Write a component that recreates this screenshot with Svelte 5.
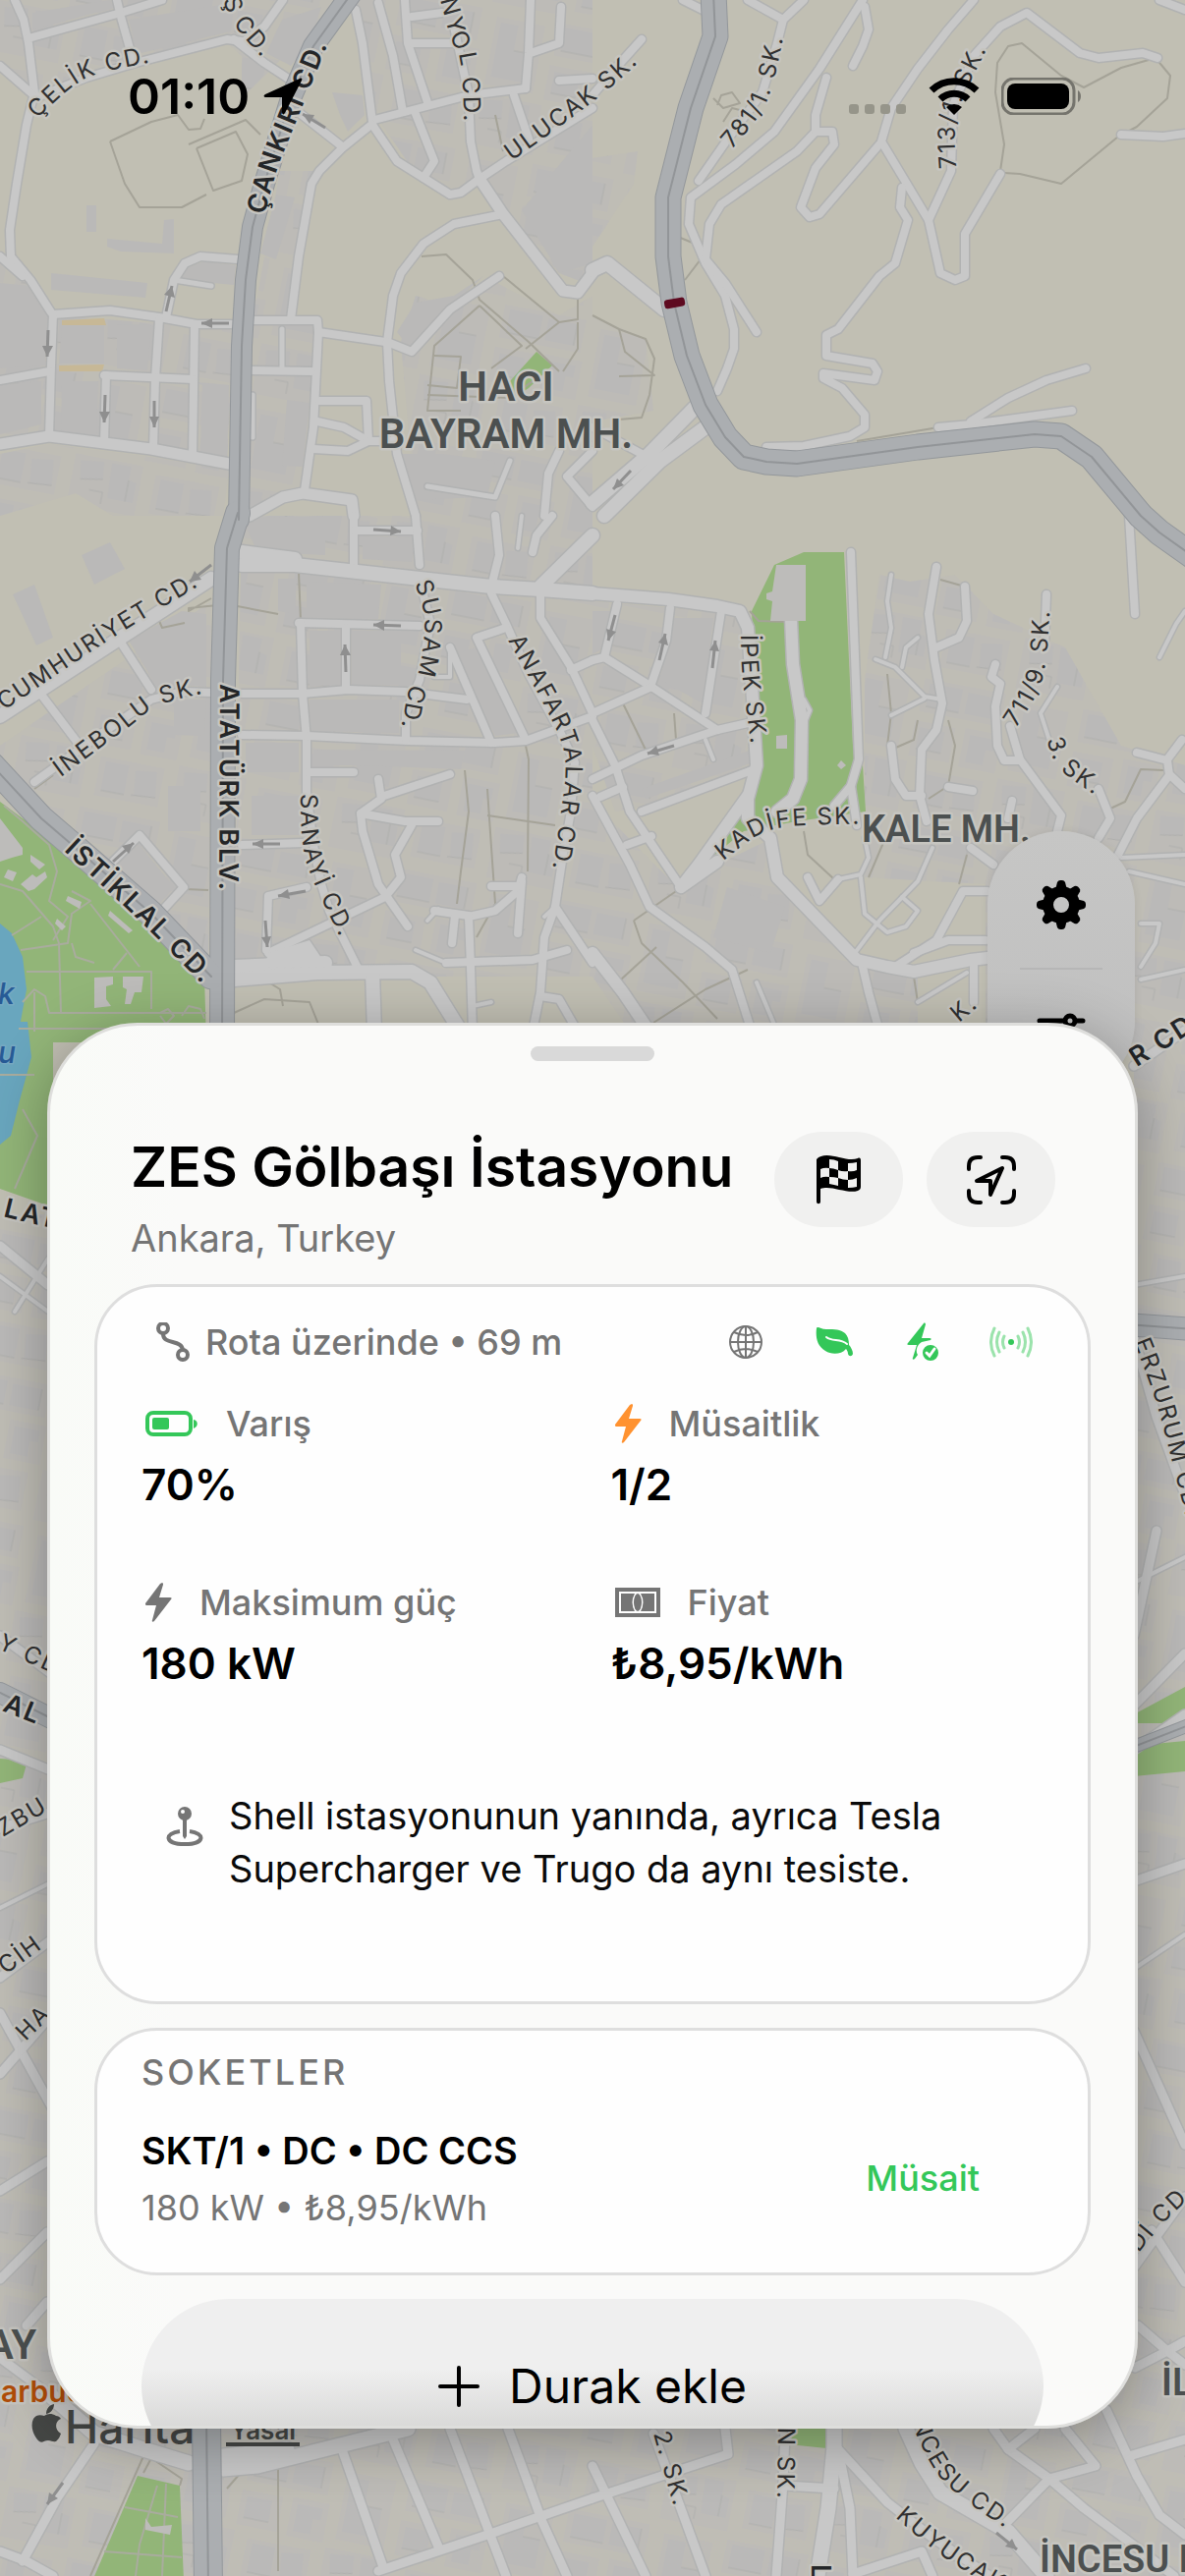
<script>
  // Each tile maps local drawing units to map units: [x offset, y offset, x units per px, y units per px].
  const tiles = {
    A: [0, 0, 2.6, 2.987],
    B: [603, 0, 2.6, 2.987],
    C: [0, 525, 2.6, 2.987],
    D: [603, 525, 2.6, 2.987],
    E: [0, 2200, 2.6, 3],
    F: [603, 2200, 2.6, 3],
    G: [0, 1040, 1.3, 1.12]
  };

  function project(tile, text) {
    const [ox, oy, sx, sy] = tiles[tile];
    return text
      .trim()
      .split(/\s+/)
      .map((p) => {
        const [x, y] = p.split(',').map(Number);
        return [Math.round(ox + x / sx), Math.round(oy + y / sy)];
      });
  }
  const line = (tile, text) => 'M' + project(tile, text).map((p) => p.join(' ')).join('L');

  // Smooth path through the points, used as the baseline of curved labels.
  function curve(tile, text) {
    const p = project(tile, text);
    let d = `M${p[0].join(' ')}`;
    for (let i = 0; i < p.length - 1; i++) {
      const a = p[i - 1] ?? p[i];
      const b = p[i];
      const c = p[i + 1];
      const e = p[i + 2] ?? c;
      const r = (n) => Math.round(n);
      d += `C${r(b[0] + (c[0] - a[0]) / 6)} ${r(b[1] + (c[1] - a[1]) / 6)} ${r(c[0] - (e[0] - b[0]) / 6)} ${r(c[1] - (e[1] - b[1]) / 6)} ${c.join(' ')}`;
    }
    return d;
  }

  const streets = {
    A: {
      8: `40,0 62,60 75,130 90,280 70,380 45,560 25,700 28,780 80,850 135,950|75,115 320,40 430,0|310,0 320,50 350,180|0,200 80,280|90,300 230,235 360,190 600,120 640,125|640,130 700,80 750,0|620,120 700,190 790,260|0,780 60,840|140,955 290,945 420,965 520,985 610,985|140,955 135,1110 130,1330|440,965 460,850 490,800 530,780 630,790|420,970 410,1150 405,1365|515,985 510,1390|0,1155 130,1130|275,1140 510,1152|280,1140 275,1345|665,975 840,975 842,1010 830,1300 805,1490|665,1125 825,1130|842,1010 1020,1040|770,970 790,780 825,560 845,520 905,450 985,375|795,345 905,445|940,30 960,130 985,370|1000,10 1040,170 1065,340|1070,0 1080,130 1110,240 1130,310|990,365 1240,290 1390,270|985,380 1050,490 1120,540 1190,590 1220,585 1270,545|1100,345 1150,490 1120,540|1200,80 1240,290 1245,430 1260,520 1270,545|1270,545 1340,490 1568,330|1330,650 1200,680 1120,740 1060,830 1040,900 1025,1040 1030,1160 1050,1380 1100,1568|1025,1040 1090,1070 1190,940 1320,840|1405,0 1400,160 1390,270|1405,160 1480,130 1485,20|1480,245 1568,240|1360,290 1400,420|1090,130 1200,130|1090,50 1170,40|845,1220 970,1220 975,1340 910,1300 840,1280|830,1365 920,1370 975,1340 1040,1340|1568,1370 1500,1450 1568,1540|1440,1568 1450,1440 1480,1370`,
      11: `0,1350 130,1325 400,1365 605,1410|660,1568 750,1510 800,1500 930,1520 935,1568|1270,545 1330,650 1490,885 1530,890 1568,830`,
      5: `745,1000 745,1130|460,850 560,870|668,1200 668,1330|1130,1480 1310,1510 1350,1400`
    },
    B: {
      8: `410,0 505,60 560,0|505,60 490,130 450,280 360,420 280,550|715,0 600,210 480,400 380,500 260,600 255,680 300,800 350,900 375,1000 375,1060 355,1120 330,1190|720,20 730,90 715,140 690,200|620,235 590,350 590,400 540,460 340,620 310,680 300,790 350,860 435,1010|590,400 635,400 640,440 590,510 550,630 575,660 600,650 760,440|1010,0 940,90 860,210 790,330 765,430 890,670 920,830 960,850 985,840 985,710 1080,530|890,670 950,520 955,320 1010,170 1080,80 1150,40 1290,160 1340,175 1455,160 1495,175|820,570 815,630 835,670 800,800 760,840 650,1000 620,1020 620,1080 740,1105 755,1130 745,1155 610,1135 610,1150 660,1180 720,1260 720,1300 680,1325 560,1355 460,1360|1400,410 1510,415 1568,405|915,1300 1000,1290 1270,1250|1000,1280 1100,1210 1200,1155 1305,1120|0,1300 130,1380|240,0 290,30|130,120 60,210 0,290|1500,0 1568,30`,
      14: `0,820 40,800 190,940|270,1240 150,1380 0,1530|310,1290 180,1400 30,1568`
    },
    C: {
      8: `320,385 400,530|110,545 205,690|90,810 260,670 400,560 480,535 560,538|640,540 800,540 920,530 1070,535 1235,560|935,0 935,150|935,45 1105,45|1100,0 1110,150|790,325 1110,335|795,325 800,540 810,680 812,840 830,1000 850,1120 870,1200 950,1380|915,340 915,530|640,665 810,670 1080,685 1310,690 1390,685 1568,610|1110,190 1140,330 1110,500 1075,600 1075,680|1300,235 1340,330 1400,480 1480,650 1520,750 1510,900 1490,1030 1470,1190 1440,1280 1430,1450 1410,1568|1340,340 1260,370 1390,680|1190,400 1300,690|1430,225 1430,310 1510,460 1568,600|1510,470 1568,440|1300,215 1320,120 1310,0|1410,110 1420,60 1460,0|815,780 935,780|1000,800 1010,860 955,905 960,960 1000,1120 1080,1250|1010,855 1190,785|955,905 1070,930 1160,930|1090,940 1045,1030 1060,1100 1020,1160 710,1330|640,1000 800,995|810,1130 710,1155 705,1320|300,1050 370,970 485,1130 430,1200|1380,1100 1370,1140 1310,1200 1240,1220 1245,1370 1250,1568|1380,1110 1370,1270|1150,1200 1240,1215|1180,1360 1410,1350 1500,1320|1300,1125 1370,1125|1470,1190 1568,1360|1430,1460 1480,1470 1530,1568|1195,1300 1205,1215`,
      14: `0,610 560,190|640,110 780,130|640,150 780,150 1300,215 1430,225 1568,235|1430,215 1568,60|620,1370 860,1360|620,1410 840,1390 1090,1385 1140,1420 1220,1568|985,1390 990,1568`,
      4: `1370,100 1380,0|1100,1320 1180,1360|1250,1490 1300,1480|1130,1230 1160,1195|1150,490 1190,490 1190,400|1470,1190 1440,1220`
    },
    D: {
      8: `65,270 30,430|205,280 195,380 155,510|340,290 300,600|30,430 155,520 330,650|0,600 155,520|0,800 130,730 330,650 410,630|0,620 60,760 100,900 235,1130|0,440 30,430|20,855 80,825|0,850 100,1060 150,1190 300,1310 370,1380 420,1568|90,1000 155,975|130,900 430,770|685,110 705,740 685,820 640,880|685,820 700,940|910,155 890,300 905,440 925,570 910,650 870,710 865,850 885,930|985,215 990,320 970,370 910,400|790,700 800,800 830,850 870,850|940,825 1005,835|1200,240 1195,400|1065,450 1055,490 1080,510 1065,580 1070,700 1090,745 1130,745|1105,640 1130,740 1240,910 1230,960|1340,830 1370,920 1340,980|1110,865 1100,920|1420,0 1435,300|1440,720 1520,745 1525,790 1440,920 1390,1030|1520,740 1560,680|1530,790 1568,830|1045,1140 980,1140 910,1290 800,1370|1040,1290 940,1290 850,1330|570,1100 600,1170 650,1105|1010,1350 1010,1480|1000,1010 1060,1060|715,1370 730,1450 760,1568`,
      12: `0,235 200,255 330,275 390,290 410,340 425,560 435,760 410,860 410,920 470,980 490,1100 700,1350 780,1370 850,1385 1000,1350 1045,1345|525,315 530,450 555,620 550,800 530,860 490,900|410,850 280,1060 235,1130 330,1050|0,1330 80,1450 150,1568`,
      4: `790,180 780,260 790,340 775,430|750,435 800,460 880,550 925,560|860,370 830,400 820,460|880,555 790,605|1230,520 1185,600 1220,720|1568,290 1545,330 1500,430|1400,1040 1568,1030|1420,1080 1568,1120|695,1330 760,1230 860,1110 900,1010|650,1105 710,1090 730,1040 720,980|710,1100 720,1210 780,1265 830,1250 860,1200 820,1160|990,1390 860,1480|435,1420 490,1568|1450,1240 1500,1240 1490,1300 1450,1370|1450,1410 1568,1380|560,560 575,590 565,620|300,680 320,740`
    },
    E: {
      9: `0,90 126,0|0,360 126,215|70,500 126,430|250,860 150,1030 60,1220|0,1190 70,1220 140,1266|905,880 1015,1240|1040,850 1160,1175|1190,815 1300,1150 1340,1266|1345,815 1435,1100 1500,1266|1000,1250 1290,1140 1568,1030|0,600 130,710`,
      15: `130,710 250,830 380,880 500,920|590,940 680,930 890,870 1080,815|590,900 760,880`
    },
    F: {
      9: `0,930 140,1266|160,830 190,920 300,1266|0,1030 360,895 350,815|510,830 505,980 485,1266|505,990 640,1000|650,880 680,1060 690,1266|650,880 780,1040 900,1150 1050,1266|690,1260 870,1190 900,1266|1060,815 1100,880 1210,970 1300,1060 1440,1180 1540,1266|1100,880 1170,815|1250,815 1330,930 1210,970 1090,1110|1360,760 1440,960 1500,1080 1568,1140|1420,900 1568,850|1442,500 1520,580 1568,550|1520,580 1435,630|1480,210 1568,370|1520,580 1568,620`,
      15: `640,815 640,870 625,1060 595,1266|830,815 870,920 920,1010 1100,1130 1200,1266`
    },
    G: {
      9: `0,255 64,300|0,700 70,745|0,830 70,855|0,920 70,900|0,1090 70,1045|0,1130 70,1240|0,1200 70,1130|1500,50 1568,10|1500,360 1530,450 1568,540|1500,780 1568,720|1500,830 1568,790|1530,580 1500,700|1500,1150 1568,1280|1500,1420 1568,1340|1500,980 1568,960`,
      4: `0,290 64,330|20,330 64,270|0,1010 70,980|1500,300 1568,290|1500,1080 1568,1040|1500,640 1568,610`
    }
  };

  const highways = [
    ['A', 22, '930,-20 830,140 770,300 700,560 668,690 650,850 640,1050 632,1580'],
    ['B', 27, '320,-20 325,110 260,330 200,600 200,780 215,920 250,1080 300,1230 350,1330 400,1390 460,1405 540,1410 860,1360 1170,1320 1240,1325 1320,1390 1450,1568 1500,1620 1600,1700'],
    ['C', 26, '630,-10 600,100 590,500 588,1600'],
    ['C', 27, '-20,760 110,920 200,1010 400,1210 560,1400'],
    ['E', 30, '545,780 550,1300'],
    ['G', 22, '0,765 80,800'],
    ['G', 24, '1490,345 1580,350'],
    ['G', 14, '1490,830 1580,800']
  ];

  const parks = [
    ['A', '1350,1160 1420,1070 1460,1110 1400,1180 1360,1210'],
    ['C', '0,870 60,920 130,980 540,1400 545,1600 0,1600'],
    ['D', '420,290 480,150 560,110 665,110 690,700 715,760 722,900 540,930 400,960 315,1040 400,880 440,760'],
    ['E', '365,960 475,990 485,1280 245,1280'],
    ['F', '520,865 540,800 625,800 620,875'],
    ['G', '0,0 70,0 70,212 0,190'],
    ['G', '0,840 36,842 30,862 0,868'],
    ['G', '1500,790 1568,758 1568,800 1500,800'],
    ['G', '1500,825 1568,820 1568,855 1500,860']
  ];

  const lakes = [
    ['C', '0,1240 30,1270 60,1340 70,1440 50,1568 40,1600 0,1600'],
    ['G', '0,0 36,0 42,40 26,90 14,130 0,140']
  ];

  const urban = [
    ['A', '0,0 900,0 640,300 640,170 600,130 360,200 240,240 100,300 80,280 0,180'],
    ['A', '0,800 80,870 140,960 620,1000 600,1400 400,1360 0,1330'],
    ['A', '0,1380 130,1350 400,1390 605,1430 590,1568 300,1568 200,1500 0,1568'],
    ['A', '830,520 740,520 680,900 660,975 770,970'],
    ['A', '660,975 845,975 840,1300 805,1490 750,1500 660,1568'],
    ['A', '940,0 1568,0 1568,870 1480,830 1270,540 1190,590 1100,530 1000,360'],
    ['A', '1060,1040 1100,900 1190,930 1300,850 1480,960 1568,900 1568,1568 1100,1568'],
    ['B', '0,480 120,460 110,560 0,750'],
    ['B', '0,960 140,1030 160,1250 0,1280'],
    ['C', '640,0 1568,0 1568,1400 980,1400 620,1370'],
    ['C', '0,700 200,540 560,260 550,1400 420,1220 210,1010 0,780'],
    ['D', '0,260 400,300 420,760 240,860 60,900 0,700'],
    ['D', '0,870 235,1140 330,1060 460,990 500,1110 700,1350 860,1400 860,1568 100,1568 0,1400'],
    ['D', '720,500 760,180 840,200 960,180 1060,300 1250,400 1400,700 1568,760 1568,1600 1040,1600 1040,1120 720,1100'],
    ['E', '0,0 1568,0 1568,1300 0,1300'],
    ['F', '0,0 1568,0 1568,1300 0,1300'],
    ['G', '0,220 70,220 70,1300 0,1300'],
    ['G', '1500,0 1568,0 1568,1300 1500,1300']
  ];

  const buildings = [
    ['A', '85,40 290,0 305,25 85,90'],
    ['A', '340,60 620,10 610,95 365,165'],
    ['A', '745,60 850,20 820,130 770,200 705,160'],
    ['A', '135,830 390,860 385,905 135,880'],
    ['A', '0,860 80,870 125,960 120,1110 0,1120'],
    ['A', '165,990 275,990 275,1105 155,1105'],
    ['A', '310,985 400,990 390,1125 310,1120'],
    ['A', '475,820 540,795 625,805 620,865 480,850'],
    ['A', '283,725 430,740 435,670 460,665 460,770 320,765 283,750'],
    ['A', '230,625 255,625 255,705 230,705'],
    ['A', '1380,640 1568,380 1568,800 1480,830'],
    ['A', '1100,920 1200,900 1280,840 1080,1050 1050,1010'],
    ['A', '0,1170 110,1160 110,1290 0,1320'],
    ['A', '165,1160 260,1160 255,1325 160,1310'],
    ['A', '760,1215 820,1225 800,1420 745,1415'],
    ['A', '730,590 780,600 730,790 690,770'],
    ['A', '535,1170 500,1160 605,1170 600,1390 530,1380'],
    ['A', '900,350 880,280 960,290 965,350 920,400'],
    ['A', '1040,1380 1170,1380 1310,1400 1290,1510 1080,1520'],
    ['C', '810,200 1010,210 1000,315 810,310'],
    ['C', '735,190 785,190 780,300 735,290'],
    ['C', '820,350 900,350 900,510 820,520'],
    ['C', '930,350 1060,350 1060,515 930,515'],
    ['C', '820,560 1055,560 1055,660 820,655'],
    ['C', '1200,420 1260,400 1370,660 1310,670'],
    ['C', '650,690 790,690 790,780 650,780'],
    ['C', '665,850 790,850 790,970 665,970'],
    ['C', '445,820 530,820 530,960 445,960'],
    ['C', '460,555 545,560 540,670 460,665'],
    ['C', '340,380 480,290 545,300 545,520 410,510'],
    ['C', '830,710 1230,715 1220,770 950,760 830,760'],
    ['C', '640,5 860,0 860,120 680,110'],
    ['C', '960,60 1100,70 1090,140 960,130'],
    ['C', '310,1050 370,1000 460,1130 415,1190'],
    ['C', '35,240 90,210 140,370 95,395'],
    ['C', '215,120 290,80 330,160 250,210'],
    ['D', '355,1130 510,1190 470,1330 320,1280'],
    ['D', '210,310 320,310 290,570 180,500'],
    ['D', '0,290 50,290 20,410 0,420'],
    ['D', '130,830 420,710 425,750 140,860']
  ];

  const plots = [
    ['D', '485,150 565,150 565,320 470,320 475,260 460,255 460,235 475,230'],
    ['D', '485,670 515,667 515,708 487,708'],
    ['D', '658,745 670,758 658,772 648,760'],
    ['C', '250,1405 300,1400 300,1425 280,1430 280,1470 295,1490 250,1495'],
    ['C', '325,1400 380,1400 375,1450 355,1450 345,1485 330,1485 335,1440 325,1435'],
    ['C', '55,1120 85,1090 95,1100 120,1080 125,1100 90,1135 75,1140'],
    ['C', '80,1030 120,1060 105,1075 80,1050'],
    ['C', '20,1075 45,1085 35,1110 10,1100'],
    ['C', '180,1155 215,1175 210,1195 175,1170'],
    ['C', '290,1200 350,1260 340,1270 285,1215'],
    ['C', '0,920 60,1010 60,1030 30,1040 0,1050'],
    ['C', '150,1225 175,1250 165,1260 145,1240'],
    ['E', '385,1090 400,1115 455,1110 450,1140 385,1125']
  ];

  const paths = [
    ['A', '290,430 400,370 470,350 500,395 530,390 540,360'],
    ['A', '290,430 330,560 370,630 480,630 545,590'],
    ['A', '520,450 625,400 655,470 640,550 565,580 520,450'],
    ['A', '500,440 650,365 690,410'],
    ['A', '1115,780 1180,775 1250,850 1270,910 1400,1040 1480,1130'],
    ['A', '1270,930 1150,1050 1130,1250 1220,1250'],
    ['A', '1270,930 1380,1050 1300,1120'],
    ['A', '1330,840 1480,980 1530,970 1530,900'],
    ['A', '1150,1080 1220,1085 1210,1180 1130,1170'],
    ['A', '1130,1200 1350,1210 1420,1150'],
    ['A', '1480,980 1390,1060'],
    ['A', '1530,980 1530,1060 1490,1130'],
    ['A', '1310,350 1330,460'],
    ['B', '1080,520 1090,440 1065,280 1070,190 1100,140 1135,130 1240,230 1300,265 1400,205 1490,175 1530,230 1520,300 1440,385 1390,415'],
    ['B', '1090,525 1130,530 1240,560 1390,415'],
    ['B', '0,960 70,1000 140,1030 165,1090 150,1200 130,1270 70,1275'],
    ['B', '70,1000 85,1070 165,1140 70,1145'],
    ['B', '320,300 345,330 390,315 370,280 340,290 330,320'],
    ['B', '345,370 370,330 410,340'],
    ['B', '225,720 270,740'],
    ['B', '285,790 245,850'],
    ['B', '700,1340 915,1300'],
    ['C', '560,250 500,290 500,280 600,270 735,300'],
    ['C', '420,320 430,340 490,325'],
    ['C', '790,170 795,320'],
    ['C', '1230,775 1240,900 1220,1080 1210,1180'],
    ['C', '1290,830 1295,920 1310,1180 1260,1280'],
    ['C', '1290,910 1470,940'],
    ['C', '1390,700 1400,740 1395,1080'],
    ['C', '490,1135 550,1137'],
    ['C', '90,830 140,790'],
    ['C', '630,1430 700,1410 740,1440 750,1490'],
    ['C', '620,1510 700,1470 820,1480 850,1568'],
    ['D', '80,570 140,710'],
    ['D', '215,600 220,680'],
    ['D', '780,480 790,600 780,700'],
    ['D', '940,620 960,700 940,820 890,860'],
    ['D', '860,620 850,680 790,710'],
    ['D', '110,1230 130,1300 240,1420 330,1530'],
    ['D', '170,1310 75,1410'],
    ['D', '410,1380 300,1440 160,1540'],
    ['D', '560,960 570,1030 640,1105'],
    ['D', '775,980 730,1100'],
    ['D', '920,195 985,215'],
    ['D', '415,290 440,320 520,322'],
    ['D', '850,1400 860,1480'],
    ['D', '230,1135 110,1230'],
    ['D', '1370,890 1410,870 1450,770 1510,775'],
    ['D', '990,1030 970,1120'],
    ['E', '735,930 735,1250'],
    ['E', '380,900 300,1110 240,1266'],
    ['E', '380,950 400,905 480,970 475,990'],
    ['E', '600,1000 635,955']
  ];

  const trails = [
    ['C', '10,880 60,930 130,1000 150,1080 130,1170 180,1220 140,1290'],
    ['C', '0,1120 60,1140 140,1250 155,1300 160,1510'],
    ['C', '55,1320 180,1300 190,1210 240,1170 190,1140'],
    ['C', '240,1180 370,1370'],
    ['C', '335,1330 300,1380'],
    ['C', '70,1385 400,1385 400,1500'],
    ['C', '190,1300 200,1340 250,1360'],
    ['C', '30,1275 110,1220'],
    ['C', '60,1480 90,1440 120,1460 130,1510 545,1510'],
    ['C', '50,1560 545,1560'],
    ['C', '90,1450 90,1568'],
    ['C', '425,1510 445,1500 460,1520 440,1545 425,1520'],
    ['C', '480,1520 500,1490 530,1500 540,1530'],
    ['E', '330,1055 470,1085'],
    ['E', '275,1190 480,1210'],
    ['E', '415,990 370,1170 360,1266'],
    ['E', '440,985 430,1266'],
    ['G', '0,60 45,60'],
    ['G', '30,100 50,130 20,190']
  ];

  // Arrows: tile, tip, tail.
  const arrows = [
    ['A', '800,345', '860,388'], ['A', '455,868', '440,948'], ['A', '532,982', '605,982'],
    ['A', '126,1085', '128,1003'], ['A', '276,1283', '279,1202'], ['A', '407,1300', '407,1220'],
    ['B', '54,1488', '102,1432'], ['C', '503,200', '558,150'], ['C', '1062,48', '988,43'],
    ['C', '988,333', '1060,335'], ['C', '913,392', '914,474'], ['C', '354,995', '300,1050'],
    ['C', '668,998', '740,998'], ['C', '736,1156', '808,1140'], ['C', '706,1310', '702,1230'],
    ['D', '42,380', '60,302'], ['D', '193,358', '176,438'], ['D', '325,380', '317,462'],
    ['D', '146,722', '216,700'], ['E', '126,1048', '166,980'], ['F', '1122,1184', '1068,1134']
  ].map(([t, tip, tail]) => {
    const [[x, y]] = project(t, tip);
    const [[u, v]] = project(t, tail);
    const a = Math.atan2(y - v, x - u);
    const wing = (s) => `${Math.round(x - 12 * Math.cos(a + s))} ${Math.round(y - 12 * Math.sin(a + s))}`;
    return { shaft: `M${u} ${v}L${x} ${y}`, head: `M${x} ${y}L${wing(0.45)}L${wing(-0.45)}Z` };
  });

  const labels = [
    ['A', 'ÇELİK CD.', '100,360 180,275 260,225 420,185'],
    ['A', 'Ş CD.', '590,0 620,75 720,210'],
    ['A', 'NYOL CD.', '1165,0 1190,110 1220,200 1230,420'],
    ['A', 'ULUCAK SK.', '1355,490 1568,310 1700,180'],
    ['B', '781/1. SK.', '370,455 460,310 510,90'],
    ['B', '713/1. SK.', '962,510 968,340 1050,130'],
    ['C', 'CUMHURİYET CD.', '10,590 300,370 560,190'],
    ['C', 'İNEBOLU SK.', '160,795 330,650 420,575 580,530'],
    ['C', 'SUSAM CD.', '1098,205 1122,310 1110,460 1080,540 1055,680'],
    ['C', 'ANAFARTALAR CD.', '1345,380 1450,600 1495,740 1485,900 1450,1160'],
    ['C', 'SANAYİ CD.', '795,845 800,990 830,1110 920,1330'],
    ['D', 'İPEK SK.', '393,360 398,500 420,720'],
    ['D', 'KADİFE SK.', '345,1048 440,970 530,945 740,935'],
    ['D', '711/9. SK.', '1120,645 1180,530 1202,430 1212,260'],
    ['D', '3. SK.', '1200,680 1240,775 1370,880'],
    ['D', 'K.', '970,1540 1050,1460'],
    ['F', '2. SK.', '160,830 225,1100'],
    ['F', 'N SK.', '492,812 488,1050'],
    ['F', 'İNCESU CD.', '840,770 870,870 950,1000 1130,1150'],
    ['F', 'KUYUCAK', '800,1085 930,1210 1100,1330'],
    ['F', 'Dİ CD.', '1446,280 1510,190 1620,70'],
    ['G', 'ERZURUM CD.', '1500,365 1535,450 1580,600'],
    ['G', 'Y CD.', '-4,715 90,750'],
    ['G', 'ZBU', '4,930 80,890'],
    ['G', 'CİH', '8,1086 80,1040'],
    ['G', 'HA', '34,1163 80,1122']
  ];

  const majorLabels = [
    ['A', 'ÇANKIRI CD.', '700,655 740,490 820,270 890,70'],
    ['C', 'ATATÜRK BLV.', '582,512 580,1240'],
    ['C', 'İSTİKLAL CD.', '170,1020 400,1265 580,1480'],
    ['G', 'LAT', '4,222 90,240'],
    ['G', 'AL', '2,785 80,812'],
    ['G', 'R CD.', '1504,52 1590,5'],
    ['F', 'L', '580,1230 580,1300']
  ];

  const roads = Object.entries(streets).flatMap(([tile, groups]) =>
    Object.entries(groups).flatMap(([w, text]) =>
      text.split('|').map((t) => ({ w: Number(w), d: line(tile, t) }))
    )
  );
  const motorways = highways.map(([t, w, pts]) => ({ w, d: line(t, pts) }));

  const bolt = 'M17 0c1 0 1 1 1 2l-4 13h11c2 0 2 1 1 2L9 39c-1 1-3 1-2-1l4-15H1c-1 0-1-1-1-2L15 1z';

  const stats = [
    { icon: 'battery', label: 'Varış', value: '70%' },
    { icon: 'bolt-orange', label: 'Müsaitlik', value: '1/2' },
    { icon: 'bolt', label: 'Maksimum güç', value: '180 kW' },
    { icon: 'cash', label: 'Fiyat', value: '₺8,95/kWh' }
  ];
</script>

<main class="screen">
  <svg class="map" viewBox="0 0 1206 2622" preserveAspectRatio="xMidYMid slice" aria-label="Harita" role="img">
    <defs>
      <pattern id="blocks" width="164" height="146" patternUnits="userSpaceOnUse" patternTransform="rotate(11)">
        <path class="lot" d="M0 0h70v52H0zM84 6h66v40H84zM8 66h50v70H8zM72 60h84v34H72zM70 104h42v36H70zM122 102h38v40h-38z" />
        <path class="house" d="M6 6l24-3 2 18-23 4zM38 3h20v14l8 2v20H40zM90 10h24v30H90zM121 14l22-3 3 26-22 2zM13 71h18v26h18v30H13zM78 64h34v24H78zM118 66h30v22h-30zM76 110h26v22H76zM128 108h26v12h-8v16h-18z" />
        <path class="hair" d="M9 25l23-4M58 17v22M90 40h24M121 39l25-2M31 97h18M78 88h34M148 66v22M76 132h26M20 34h14v12" />
      </pattern>
      {#each labels as [tile, , pts], i}
        <path id="label-{i}" d={curve(tile, pts)} />
      {/each}
      {#each majorLabels as [tile, , pts], i}
        <path id="major-{i}" d={curve(tile, pts)} />
      {/each}
    </defs>

    <rect class="land" width="1206" height="2622" />
    {#each urban as [t, pts]}<path class="urban" d="{line(t, pts)}Z" /><path fill="url(#blocks)" d="{line(t, pts)}Z" />{/each}
    <path class="warm" d={line('A', '165,975 275,968 280,990 165,1000')} />
    <path class="warm" d={line('A', '155,1110 275,1108 270,1128 155,1128')} />
    <path class="warm" d={line('A', '90,940 120,950 120,1000 105,1005')} />
    {#each buildings as [t, pts]}<path class="house" d="{line(t, pts)}Z" />{/each}
    {#each parks as [t, pts]}<path class="park" d="{line(t, pts)}Z" />{/each}
    {#each lakes as [t, pts]}<path class="lake" d="{line(t, pts)}Z" />{/each}
    {#each paths as [t, pts]}<path class="footpath" d={line(t, pts)} />{/each}
    {#each trails as [t, pts]}<path class="trail" d={line(t, pts)} />{/each}
    {#each roads as r}<path class="casing" stroke-width={r.w + 3} d={r.d} />{/each}
    <path class="casing" stroke-width="3" d="{line('C', '710,1330 820,1290 865,1370 700,1375')}Z" />
    {#each roads as r}<path class="road" stroke-width={r.w} d={r.d} />{/each}
    <path class="plaza" d="{line('C', '710,1330 820,1290 865,1370 700,1375')}Z" />
    {#each plots as [t, pts]}<path class="plot" d="{line(t, pts)}Z" />{/each}
    {#each motorways as m}<path class="motor-edge" stroke-width={m.w} d={m.d} />{/each}
    {#each motorways as m}<path class="motor" stroke-width={m.w - 2} d={m.d} />{/each}
    {#each motorways as m}<path class="median" d={m.d} />{/each}
    <rect class="closure" x="676" y="304" width="21" height="9" rx="3" transform="rotate(-10 686 308)" />
    {#each arrows as a}<path class="shaft" d={a.shaft} /><path class="head" d={a.head} />{/each}

    {#each labels as [, text], i}
      <text class="street"><textPath href="#label-{i}">{text}</textPath></text>
    {/each}
    {#each majorLabels as [, text], i}
      <text class="street major"><textPath href="#major-{i}">{text}</textPath></text>
    {/each}
    <g class="district">
      <text x="515" y="408" text-anchor="middle">HACI</text>
      <text x="515" y="456" text-anchor="middle">BAYRAM MH.</text>
      <text x="37" y="2401" text-anchor="end">KOLAY</text>
    </g>
    <g class="district small">
      <text x="877" y="857">KALE MH.</text>
      <text x="1058" y="2618">İNCESU MH.</text>
      <text x="1182" y="2438">İL</text>
    </g>
    <text class="water-name" x="-2" y="1022">k</text>
    <text class="water-name" x="-2" y="1082">u</text>
    <text class="poi" x="1" y="2445">arbucks</text>
    <g class="credit">
      <path d="M57 2459c-5-3-9-2-12 0-3-1-8-2-11 3-4 8 1 19 6 23 3 2 5-1 9-1s6 3 9 0c2-2 3-4 4-7-7-4-6-13 0-15-1-2-3-3-5-3zM47 2457c0-5 3-9 8-10 0 5-3 9-8 10z" />
      <text x="66" y="2487">Harita</text>
      <text class="legal" x="234" y="2483">Yasal</text>
      <path d="M230 2486h75v4h-75z" />
    </g>
  </svg>

  <header class="status">
    <div class="clock">
      <time>01:10</time>
      <svg width="40" height="38" viewBox="0 0 40 38"><path d="M37 1c2-1 3 0 2 2L22 36c-1 2-3 2-3-1V20H3c-3 0-3-2-1-3z" /></svg>
    </div>
    <div class="signals">
      <svg class="dots" width="59" height="38" viewBox="0 0 59 38"><rect x="0" y="27" width="10" height="10" rx="3" /><rect x="16" y="27" width="10" height="10" rx="3" /><rect x="32" y="27" width="10" height="10" rx="3" /><rect x="48" y="27" width="10" height="10" rx="3" /></svg>
      <svg width="52" height="38" viewBox="0 0 52 38"><path class="wave" d="M3 13a33 33 0 0 1 46 0M12 22a20 20 0 0 1 28 0" /><path d="M26 38l-8-8a12 12 0 0 1 16 0z" /></svg>
      <svg width="82" height="38" viewBox="0 0 82 38"><rect class="shell" x="1" y="1" width="73" height="36" rx="12" /><rect x="6" y="6" width="63" height="26" rx="8" /><path class="nub" d="M78 13c4 2 4 10 0 12z" /></svg>
    </div>
  </header>

  <nav class="controls" aria-label="Harita kontrolleri">
    <button aria-label="Ayarlar">
      <svg width="52" height="52" viewBox="-26 -26 52 52">
        <path fill-rule="evenodd" d="M-19 0a19 19 0 1 0 38 0a19 19 0 1 0-38 0M-8 0a8 8 0 1 0 16 0a8 8 0 1 0-16 0" />
        {#each [0, 45, 90, 135, 180, 225, 270, 315] as a}
          <path transform="rotate({a})" d="M-6-15l2-8q1-2 3-2h2q2 0 3 2l2 8z" />
        {/each}
      </svg>
    </button>
    <span class="rule"></span>
    <button aria-label="Filtreler">
      <svg width="50" height="44" viewBox="0 0 50 44"><path class="slider" d="M3 22h25M40 22h7M3 38h8M22 38h25" /><circle class="slider" cx="34" cy="22" r="5" /><circle class="slider" cx="16" cy="38" r="5" /></svg>
    </button>
  </nav>

  <section class="sheet">
    <div class="handle"></div>
    <header class="heading">
      <div class="name">
        <h1>ZES Gölbaşı İstasyonu</h1>
        <p>Ankara, Turkey</p>
      </div>
      <div class="actions">
        <button aria-label="Varış noktası yap">
          <svg width="46" height="50" viewBox="0 0 46 50">
            <path d="M0 4c5-6 15-4 23-2s14 3 19 1c2-1 3 0 3 2v27c0 2-1 3-3 4-6 2-12 0-19-1-7-2-14-3-19-1v13c0 3-4 3-4 0z" />
            <path class="square" d="M13 4q5 0 9 2v9q-5-2-9-2zM32 8q5 0 9-1v8q-4 2-9 1zM4 14q4-2 9-1v9q-5-1-9 1zM22 15q5 2 10 1v9q-5 0-10-2zM13 22q5 0 9 1v8q-4-1-9-2zM32 25q5 0 9-2v9q-4 1-9 1z" />
          </svg>
        </button>
        <button aria-label="Haritada ortala">
          <svg width="50" height="50" viewBox="0 0 50 50"><path class="frame" d="M2 14v-3q0-9 9-9h3M36 2h3q9 0 9 9v3M48 36v3q0 9-9 9h-3M14 48h-3q-9 0-9-9v-3" /><path class="compass" d="M36 13L24 40V26H10z" /></svg>
        </button>
      </div>
    </header>

    <article class="card overview">
      <div class="route">
        <svg width="34" height="40" viewBox="0 0 34 40"><g class="route-line"><circle cx="7" cy="6" r="5" /><circle cx="27" cy="33" r="5" /><path d="M7 12c0 11 19 5 20 16" /></g></svg>
        <span>Rota üzerinde • 69 m</span>
        <ul class="badges">
          <li><svg width="36" height="36" viewBox="0 0 36 36"><g class="globe"><circle cx="18" cy="18" r="16" /><ellipse cx="18" cy="18" rx="8" ry="16" /><path d="M18 2v32M2 18h32M6 8q12 6 24 0M6 28q12-6 24 0" /></g></svg></li>
          <li><svg width="38" height="32" viewBox="0 0 38 32"><path class="green" d="M1 2c1-3 4 1 10 1 9 0 14 0 19 4 3 3 4 7 4 12 2 2 4 6 4 9-1 3-4 3-5 0 0-2-1-4-2-5-5 6-15 6-21 2C1 20 0 10 1 2z" /><path class="vein" d="M11 11c6 5 14 1 21 7" /></svg></li>
          <li><svg width="34" height="40" viewBox="0 0 34 40"><path class="green" d="M18 1c1-1 2 0 2 1l-4 14h8c2 0 2 1 1 2l-9 2c-6 4-6 10-4 13l-3 4c-1 1-3 1-2-1l4-13H3c-2 0-2-1-1-2z" /><circle class="ring" cx="25" cy="31" r="9" /><path class="tick" d="M21 31l3 3 5-7" /></svg></li>
          <li><svg width="44" height="32" viewBox="0 0 44 32"><circle class="green" cx="22" cy="16" r="3" /><path class="radio" d="M15 10q-3 6 0 12M10 6q-5 10 0 20M5 2q-7 14 0 28M29 10q3 6 0 12M34 6q5 10 0 20M39 2q7 14 0 28" /></svg></li>
        </ul>
      </div>

      <dl class="stats">
        {#each stats as s}
          <div>
            <dt>
              {#if s.icon === 'battery'}
                <svg width="54" height="28" viewBox="0 0 54 28"><rect class="cell" x="2" y="3" width="44" height="22" rx="6" /><rect class="green" x="7" y="8" width="17" height="12" rx="2" /><path class="green" d="M49 10c5 1 5 7 0 9z" /></svg>
              {:else if s.icon === 'cash'}
                <svg width="46" height="32" viewBox="0 0 46 32"><rect class="note-edge" x="2" y="3" width="42" height="26" /><path class="grey" d="M6 7h14q-5 9 0 18H6zM40 7H26q5 9 0 18h14z" /><ellipse class="grey" cx="23" cy="16" rx="4" ry="9" /></svg>
              {:else}
                <svg class:orange={s.icon === 'bolt-orange'} class="grey" width="27" height="40" viewBox="0 0 27 40"><path d={bolt} /></svg>
              {/if}
              <span>{s.label}</span>
            </dt>
            <dd>{s.value}</dd>
          </div>
        {/each}
      </dl>

      <div class="remark">
        <svg width="38" height="42" viewBox="0 0 38 42"><path class="grey" d="M17 13h4v18l-2 3-2-3z" /><circle class="grey" cx="19" cy="8" r="7" /><circle class="glint" cx="17" cy="6" r="2" /><path class="base" d="M14 26C-2 28-2 39 19 39s21-11 5-13" /></svg>
        <p>Shell istasyonunun yanında, ayrıca Tesla Supercharger ve Trugo da aynı tesiste.</p>
      </div>
    </article>

    <article class="card sockets">
      <h2>SOKETLER</h2>
      <div class="socket">
        <div>
          <h3>SKT/1 • DC • DC CCS</h3>
          <p>180 kW • ₺8,95/kWh</p>
        </div>
        <strong>Müsait</strong>
      </div>
    </article>

    <button class="add">
      <svg width="42" height="42" viewBox="0 0 42 42"><path d="M21 2v38M2 21h38" /></svg>
      Durak ekle
    </button>
  </section>
</main>

<style>
  :global(body) { margin: 0; background: #c1bfb3; }

  .screen {
    position: relative;
    display: flex;
    flex-direction: column;
    height: 100vh;
    overflow: hidden;
    font-family: Inter, "Noto Sans", sans-serif;
    color: #000;
  }
  h1, h2, h3, p, dl, dd, ul { margin: 0; padding: 0; }
  button { border: 0; padding: 0; font: inherit; color: inherit; background: none; }
  svg { display: block; flex: none; }

  .map { position: absolute; inset: 0; width: 100%; height: 100%; }
  .map path { stroke-linejoin: round; }
  .land { fill: #c1bfb3; }
  .urban { fill: #bfbdb5; }
  .lot { fill: #bdbbb7; }
  .house { fill: #bab9b8; }
  .hair { fill: none; stroke: #afafad; }
  .warm { fill: #c7b896; }
  .park { fill: #92b578; }
  .lake { fill: #69a6be; }
  .plot { fill: #bdbcba; }
  .plaza { fill: #c8c8c8; }
  .footpath, .trail { fill: none; stroke: #a5a398; stroke-width: 2; }
  .trail { stroke: #a9ac9e; }
  .casing, .road, .motor, .motor-edge, .median { fill: none; stroke-linecap: round; }
  .casing { stroke: #b1b2b2; }
  .road { stroke: #c8c8c8; }
  .motor-edge { stroke: #93979b; }
  .motor { stroke: #abaeb1; }
  .median { stroke: #929598; stroke-width: 2; }
  .closure { fill: #5e0a20; }
  .shaft { fill: none; stroke: #8f8f8f; stroke-width: 3; }
  .head { fill: #8f8f8f; }
  .street, .district, .water-name, .poi { paint-order: stroke; stroke: #c6c5c0; stroke-width: 5; stroke-linejoin: round; }
  .street { font-size: 24px; letter-spacing: 2px; fill: #303030; }
  .major { font-size: 27px; font-weight: 600; letter-spacing: 2px; fill: #242628; }
  .district { font-family: "Liberation Sans Narrow", Roboto, sans-serif; font-size: 42px; font-weight: 600; fill: #4c5050; }
  .small { font-size: 38px; }
  .water-name { font-size: 30px; font-style: italic; font-weight: 500; fill: #275b96; stroke: #77a9c2; stroke-width: 3; }
  .poi { font-size: 30px; font-weight: 600; fill: #b04d08; }
  .credit { fill: #454745; font-size: 46px; font-weight: 500; }
  .legal { font-size: 26px; font-weight: 600; }

  .status {
    position: relative;
    display: flex;
    justify-content: space-between;
    align-items: center;
    height: 196px;
    padding: 0 105px 0 130px;
    box-sizing: border-box;
  }
  .clock, .signals { display: flex; align-items: center; }
  .clock { gap: 14px; font-size: 50px; line-height: 56px; font-weight: 600; }
  .signals { gap: 22px; }
  .dots { fill: #96958a; }
  .wave { fill: none; stroke: #000; stroke-width: 7; }
  .shell { fill: none; stroke: #75746d; stroke-width: 3; }
  .nub { fill: #75746d; }

  .controls {
    position: relative;
    display: flex;
    flex-direction: column;
    align-items: center;
    align-self: flex-end;
    width: 150px;
    height: 268px;
    margin: 650px 51px -73px 0;
    padding-top: 23px;
    box-sizing: border-box;
    border-radius: 75px;
    background: linear-gradient(#c6c6c5, #bfbfbf);
    box-shadow: 0 0 8px rgba(0, 0, 0, 0.08);
  }
  .controls button { display: grid; place-items: center; width: 120px; height: 104px; }
  .rule { width: 84px; height: 2px; margin-top: 12px; background: #b6b6b6; }
  .slider { fill: none; stroke: #000; stroke-width: 5; stroke-linecap: round; }

  .sheet {
    position: relative;
    flex: 1 1 0;
    min-height: 0;
    margin: 0 48px 150px;
    padding: 21px 45px 0;
    box-sizing: border-box;
    overflow: hidden;
    border: 3px solid #dededc;
    border-radius: 92px;
    background: linear-gradient(90deg, #f9fbf7, #fafaf9 12%);
    box-shadow: 0 12px 60px rgba(0, 0, 0, 0.3);
  }
  .handle { width: 126px; height: 15px; margin: 0 auto 72px; border-radius: 8px; background: #d9d9d9; }

  .heading { display: flex; justify-content: space-between; align-items: flex-start; padding: 0 36px 0 37px; margin-bottom: 23px; }
  .name { display: flex; flex-direction: column; gap: 12px; }
  h1 { font-size: 57px; line-height: 72px; font-weight: 600; white-space: nowrap; }
  .name p { font-size: 38px; line-height: 48px; color: #757575; }
  .actions { display: flex; gap: 24px; }
  .actions button { display: grid; place-items: center; width: 131px; height: 97px; border-radius: 49px; background: #f0f0ef; }
  .square { fill: #f0f0ef; }
  .frame, .compass { fill: none; stroke: #000; stroke-width: 4; stroke-linecap: round; stroke-linejoin: round; }

  .card { border: 3px solid #dedede; border-radius: 64px; background: #fefefe; }
  .overview { padding: 36px 8px 108px 45px; margin-bottom: 24px; }
  .route { display: flex; align-items: center; padding: 0 48px 0 15px; margin-bottom: 43px; font-size: 36px; line-height: 40px; font-weight: 500; color: #757575; }
  .route span { margin-left: 16px; }
  .route-line { fill: none; stroke: #757575; stroke-width: 4; }
  .badges { display: flex; gap: 46px; margin-left: auto; list-style: none; }
  .badges li { display: grid; place-items: center; width: 44px; height: 40px; }
  .globe { fill: none; stroke: #757575; stroke-width: 2; }
  .green { fill: #34c759; }
  .vein { fill: none; stroke: #fefefe; stroke-width: 2; stroke-linecap: round; }
  .ring { fill: #34c759; stroke: #fefefe; stroke-width: 2; }
  .tick { fill: none; stroke: #fefefe; stroke-width: 3; stroke-linecap: round; }
  .radio { fill: none; stroke: #9be3ac; stroke-width: 3; stroke-linecap: round; }

  .stats { display: grid; grid-template-columns: 1fr 1fr; row-gap: 72px; margin-bottom: 100px; }
  dt { display: flex; align-items: center; height: 40px; margin: 0 0 14px 4px; font-size: 36px; line-height: 40px; font-weight: 500; color: #757575; }
  dt span { margin-left: 28px; }
  dd { font-size: 44px; line-height: 56px; font-weight: 600; }
  .cell { fill: none; stroke: #34c759; stroke-width: 4; }
  .note-edge { fill: none; stroke: #757575; stroke-width: 4; }
  .grey { fill: #757575; }
  .orange { fill: #ff9230; }

  .remark { display: flex; align-items: flex-start; gap: 26px; padding-left: 25px; }
  .remark svg { margin-top: 17px; }
  .remark p { max-width: 780px; font-size: 38px; line-height: 54px; color: #0a0a0a; }
  .glint { fill: #fefefe; }
  .base { fill: none; stroke: #757575; stroke-width: 4; }

  .sockets { padding: 22px 110px 44px 45px; margin-bottom: 24px; }
  h2 { font-size: 36px; line-height: 40px; font-weight: 500; letter-spacing: 3px; color: #757575; margin-bottom: 36px; }
  .socket { display: flex; justify-content: space-between; align-items: center; }
  h3 { font-size: 38px; line-height: 48px; font-weight: 600; margin-bottom: 12px; }
  .socket p { font-size: 36px; line-height: 44px; color: #757575; }
  strong { font-size: 36px; line-height: 44px; font-weight: 500; color: #34c759; }

  .add {
    display: flex;
    align-items: center;
    justify-content: center;
    gap: 30px;
    width: calc(100% - 96px);
    height: 177px;
    margin: 0 48px;
    border-radius: 89px;
    background: linear-gradient(#efefef 40%, #d8d8d7 75%);
    font-size: 48px;
    line-height: 56px;
  }
  .add svg { fill: none; stroke: #000; stroke-width: 4; stroke-linecap: round; }
</style>
